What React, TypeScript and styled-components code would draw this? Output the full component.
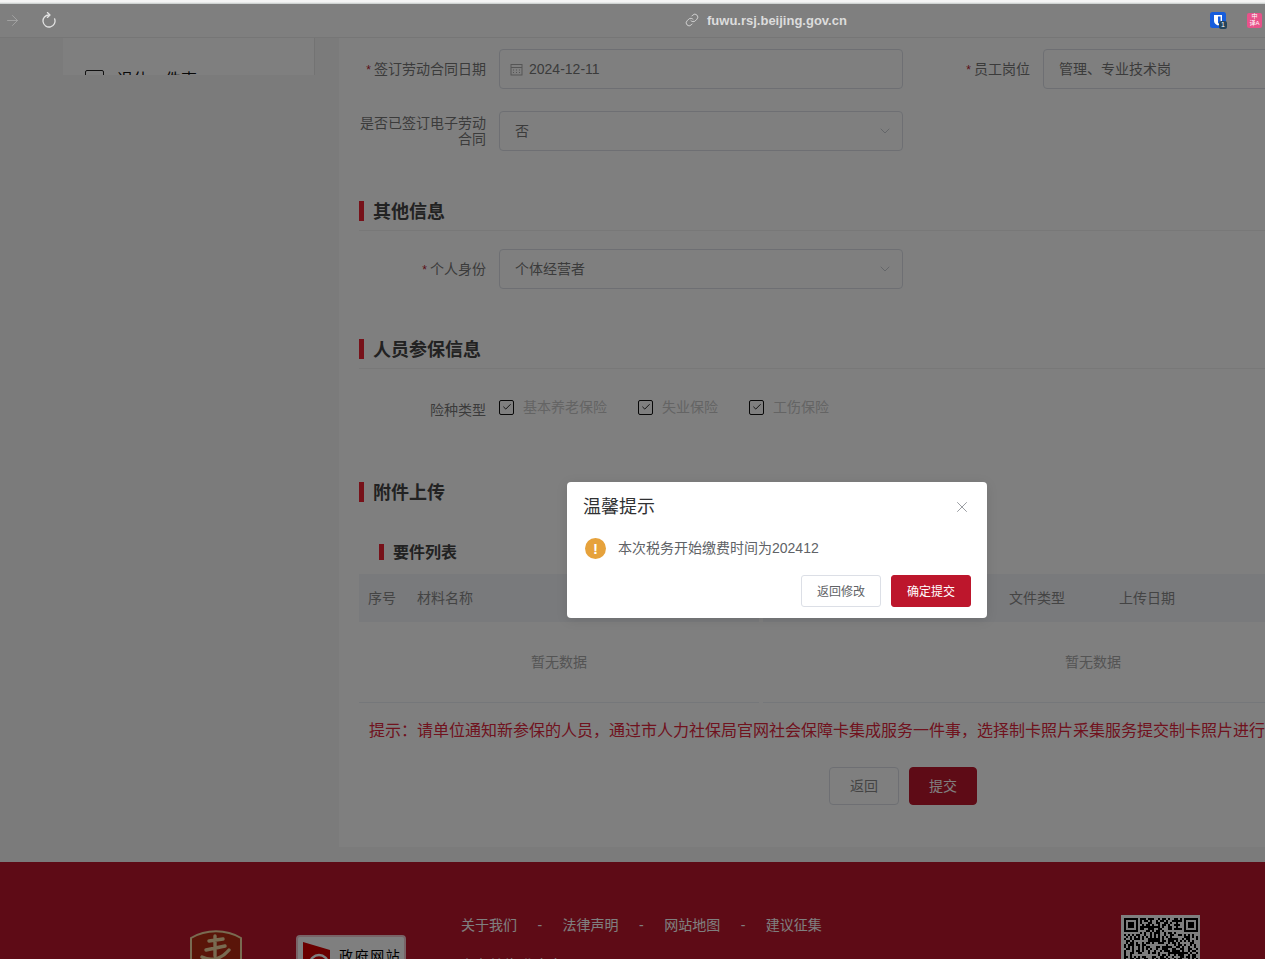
import styled, { createGlobalStyle } from "styled-components";
import { ArrowRight, Check, ChevronDown, Link, X } from "lucide-react";

const FONT = `"Liberation Sans", "Noto Sans CJK SC", sans-serif`;

const NOTICE =
  "提示\uFF1A请单位通知新参保的人员\uFF0C通过市人力社保局官网社会保障卡集成服务一件事\uFF0C选择制卡照片采集服务提交制卡照片进行制卡。";

const GlobalStyle = createGlobalStyle`
  html, body {
    margin: 0;
    padding: 0;
    height: 100%;
    overflow: hidden;
    background: #fff;
    font-family: ${FONT};
  }
  * {
    box-sizing: border-box;
  }
`;

function QrCode() {
  const size = 37;
  const cells: { x: number; y: number }[] = [];
  let seed = 7;
  const finder = (x: number, y: number, ox: number, oy: number) => {
    const dx = x - ox;
    const dy = y - oy;
    if (dx < -1 || dy < -1 || dx > 7 || dy > 7) return null;
    if (dx < 0 || dy < 0 || dx > 6 || dy > 6) return false;
    if (dx === 0 || dy === 0 || dx === 6 || dy === 6) return true;
    return dx >= 2 && dx <= 4 && dy >= 2 && dy <= 4;
  };
  for (let y = 0; y < size; y++) {
    for (let x = 0; x < size; x++) {
      seed = (seed * 1103515245 + 12345) & 0x7fffffff;
      const f = finder(x, y, 0, 0) ?? finder(x, y, 30, 0) ?? finder(x, y, 0, 30);
      const on = f === null ? (seed >> 12) % 2 === 0 : f;
      if (on) cells.push({ x, y });
    }
  }
  return (
    <QrBox>
      <svg width="74" height="74" viewBox={`0 0 ${size} ${size}`}>
        {cells.map((c) => (
          <rect key={`${c.x}-${c.y}`} x={c.x} y={c.y} width="1" height="1" fill="#000" />
        ))}
      </svg>
    </QrBox>
  );
}

function ReloadIcon() {
  return (
    <svg width="16" height="16" viewBox="0 0 16 16" fill="none" stroke="#e2e2e2" strokeWidth="1.3">
      <path d="M8 3A6 6 0 1 0 13.6 6.8" strokeLinecap="round" />
      <path d="M6.4 0.6L9 3L6.4 5.4" strokeLinecap="round" strokeLinejoin="round" />
    </svg>
  );
}

function CalendarIcon() {
  return (
    <svg width="13" height="13" viewBox="0 0 13 13" fill="none" stroke="#aaa" strokeWidth="1">
      <rect x="1" y="1.5" width="11" height="10.5" />
      <path d="M1 4.5h11" />
      <path d="M3 7h1M6 7h1M9 7h1M3 9.5h1M6 9.5h1M9 9.5h1" />
    </svg>
  );
}

function Emblem() {
  return (
    <svg width="52" height="60" viewBox="0 0 52 60">
      <path
        d="M1 8C16 -1 36 -1 51 8V42C51 52 36 58 26 60C16 58 1 52 1 42Z"
        fill="#b52a12"
        stroke="#f2d6a2"
        strokeWidth="2"
      />
      <path
        d="M25 6V14M19 11L33 9M16 20L35 16M25 14V26M12 27C24 33 34 26 39 20"
        fill="none"
        stroke="#f2d6a2"
        strokeWidth="3.4"
        strokeLinecap="round"
      />
    </svg>
  );
}

function GovFlag() {
  return (
    <svg width="30" height="26" viewBox="0 0 30 26">
      <path d="M0 0L27 8V26H0Z" fill="#d40000" />
      <circle cx="16" cy="22" r="9" fill="none" stroke="#fff" strokeWidth="2.4" />
    </svg>
  );
}

function Select({ value }: { value: string }) {
  return (
    <InputBox>
      <SelectValue>{value}</SelectValue>
      <ChevronDown size={16} color="#c0c4cc" strokeWidth={1.3} />
    </InputBox>
  );
}

function InsuranceOption({ label }: { label: string }) {
  return (
    <CheckOption>
      <CheckBox>
        <Check size={10} color="#000" strokeWidth={2} />
      </CheckBox>
      <CheckLabel>{label}</CheckLabel>
    </CheckOption>
  );
}

export default function App() {
  return (
    <Page>
      <GlobalStyle />
      <BrowserBar>
        <TopEdge />
        <BarRow>
          <BarLeft>
            <ArrowRight size={17} color="#a5a5a5" strokeWidth={1.3} />
            <ReloadIcon />
          </BarLeft>
          <UrlBox>
            <Link size={14} color="#dadada" strokeWidth={1.5} />
            <UrlText>fuwu.rsj.beijing.gov.cn</UrlText>
          </UrlBox>
          <BarRight>
            <Shield>
              <svg width="16" height="16" viewBox="0 0 16 16">
                <rect width="16" height="16" rx="2.5" fill="#175ddc" />
                <path d="M4 3H12V9C12 11 10 12.5 8 13.5C6 12.5 4 11 4 9Z" fill="#fff" />
                <path d="M8 4.6H10.6V8.8C10.6 10 9.4 11 8 11.8Z" fill="#175ddc" />
              </svg>
              <ShieldBadge>1</ShieldBadge>
            </Shield>
            <TranslateBadge>
              中
              <br />
              译A
            </TranslateBadge>
          </BarRight>
        </BarRow>
      </BrowserBar>

      <Main>
        <Sidebar>
          <MenuCard>
            <MenuRow>
              <MenuIcon />
              <MenuText>退休一件事</MenuText>
              <ChevronDown size={15} color="#111" strokeWidth={1.5} />
            </MenuRow>
          </MenuCard>
        </Sidebar>

        <Content>
          <FieldGrid>
            <Field>
              <FieldLabel>
                <Star>*</Star>签订劳动合同日期
              </FieldLabel>
              <InputBox>
                <CalendarIcon />
                <DateValue>2024-12-11</DateValue>
              </InputBox>
            </Field>
            <Field>
              <FieldLabel>
                <Star>*</Star>员工岗位
              </FieldLabel>
              <InputBox>
                <SelectValue>管理、专业技术岗</SelectValue>
              </InputBox>
            </Field>
          </FieldGrid>
          <FieldGrid>
            <Field>
              <FieldLabel>是否已签订电子劳动合同</FieldLabel>
              <Select value="否" />
            </Field>
          </FieldGrid>

          <SectionTitle>其他信息</SectionTitle>
          <FieldGrid>
            <Field>
              <FieldLabel>
                <Star>*</Star>个人身份
              </FieldLabel>
              <Select value="个体经营者" />
            </Field>
          </FieldGrid>

          <SectionTitle>人员参保信息</SectionTitle>
          <CheckRow>
            <CheckRowLabel>险种类型</CheckRowLabel>
            <InsuranceOption label="基本养老保险" />
            <InsuranceOption label="失业保险" />
            <InsuranceOption label="工伤保险" />
          </CheckRow>

          <SectionTitle $plain>附件上传</SectionTitle>
          <SubTitle>要件列表</SubTitle>
          <Tables>
            <TableBlock $width={400}>
              <TableHead>
                <HeadCell $width={58} $pad={9}>序号</HeadCell>
                <HeadCell>材料名称</HeadCell>
              </TableHead>
              <TableEmpty>暂无数据</TableEmpty>
            </TableBlock>
            <TableBlock $width={660}>
              <TableHead>
                <HeadCell $width={246} />
                <HeadCell $width={110}>文件类型</HeadCell>
                <HeadCell>上传日期</HeadCell>
              </TableHead>
              <TableEmpty>暂无数据</TableEmpty>
            </TableBlock>
          </Tables>
          <Notice>{NOTICE}</Notice>
          <Actions>
            <PageButton>返回</PageButton>
            <PageButton $primary>提交</PageButton>
          </Actions>
        </Content>
      </Main>

      <Footer>
        <EmblemSlot>
          <Emblem />
        </EmblemSlot>
        <GovBadge>
          <GovFlag />
          <GovText>政府网站</GovText>
        </GovBadge>
        <FooterLinks>
          <LinkRow>
            <span>关于我们</span>
            <Dash>-</Dash>
            <span>法律声明</span>
            <Dash>-</Dash>
            <span>网站地图</span>
            <Dash>-</Dash>
            <span>建议征集</span>
          </LinkRow>
          <LinkRow>主办单位:北京市</LinkRow>
        </FooterLinks>
        <QrCode />
      </Footer>

      <Overlay />
      <Dialog role="dialog">
        <DialogHeader>
          <DialogTitle>温馨提示</DialogTitle>
          <X size={18} color="#909399" strokeWidth={1.2} />
        </DialogHeader>
        <DialogBody>
          <WarnIcon>!</WarnIcon>
          <DialogText>本次税务开始缴费时间为202412</DialogText>
        </DialogBody>
        <DialogFooter>
          <DialogButton>返回修改</DialogButton>
          <DialogButton $primary>确定提交</DialogButton>
        </DialogFooter>
      </Dialog>
    </Page>
  );
}

const Page = styled.div`
  position: relative;
  width: 100%;
  height: 100vh;
  overflow: hidden;
  display: flex;
  flex-direction: column;
  font-family: ${FONT};
`;

const BrowserBar = styled.header`
  position: relative;
  z-index: 3;
  flex: none;
  height: 38px;
  background: #7f7f7f;
  border-bottom: 1px solid #767676;
`;

const TopEdge = styled.div`
  height: 4px;
  background: linear-gradient(#f4f4f4 0, #f4f4f4 2px, #c3c8c7 4px);
`;

const BarRow = styled.div`
  height: 33px;
  display: flex;
  align-items: center;
  padding-bottom: 1px;
`;

const BarLeft = styled.div`
  display: flex;
  align-items: center;
  gap: 20px;
  padding-left: 4px;
  width: 685px;
`;

const UrlBox = styled.div`
  display: flex;
  align-items: center;
  gap: 8px;
`;

const UrlText = styled.span`
  font-size: 13px;
  font-weight: 700;
  color: #dcdcdc;
`;

const BarRight = styled.div`
  margin-left: auto;
  display: flex;
  align-items: center;
  gap: 21px;
  padding-right: 3px;
`;

const Shield = styled.div`
  position: relative;
  width: 16px;
  height: 16px;
`;

const ShieldBadge = styled.span`
  position: absolute;
  right: -1px;
  bottom: -1px;
  width: 8px;
  height: 8px;
  background: #24445c;
  border-radius: 2px;
  color: #fff;
  font-size: 7px;
  line-height: 8px;
  text-align: center;
`;

const TranslateBadge = styled.div`
  width: 15px;
  height: 15px;
  overflow: hidden;
  border-radius: 2px;
  background: #e8528a;
  color: #fff;
  font-size: 6px;
  line-height: 7px;
  text-align: center;
  white-space: nowrap;
`;

const Main = styled.main`
  flex: none;
  height: 824px;
  display: flex;
  background: #f6f6f6;
`;

const Sidebar = styled.aside`
  flex: none;
  width: 339px;
  padding-left: 63px;
`;

const MenuCard = styled.div`
  width: 252px;
  height: 37px;
  overflow: hidden;
  background: #fff;
  border-right: 1px solid #e6e6e6;
  padding: 30px 22px 0;
`;

const MenuRow = styled.div`
  display: flex;
  align-items: center;
  height: 20px;
`;

const MenuIcon = styled.span`
  width: 19px;
  height: 16px;
  border: 1.5px solid #222;
  border-radius: 2px;
  margin-right: 13px;
  flex: none;
`;

const MenuText = styled.span`
  flex: 1;
  font-size: 16px;
  color: #111;
`;

const Content = styled.section`
  flex: 1;
  min-width: 0;
  height: 809px;
  overflow: hidden;
  background: #fff;
  padding: 11px 0 0 20px;
`;

const FieldGrid = styled.div`
  display: flex;
  width: 1088px;
  margin-bottom: 22px;
`;

const Field = styled.div`
  flex: none;
  width: 544px;
  display: flex;
  align-items: center;
`;

const FieldLabel = styled.label`
  flex: none;
  width: 127px;
  margin-right: 13px;
  font-size: 14px;
  line-height: 16px;
  color: #777;
  text-align: right;
`;

const Star = styled.span`
  color: #b3202f;
  margin-right: 3px;
  font-size: 12px;
`;

const InputBox = styled.div`
  flex: none;
  width: 404px;
  height: 40px;
  border: 1px solid #dcdfe6;
  border-radius: 4px;
  display: flex;
  align-items: center;
  padding: 0 9px 0 10px;
  font-size: 14px;
  color: #777;
`;

const SelectValue = styled.span`
  flex: 1;
  padding: 0 0 2px 5px;
`;

const DateValue = styled.span`
  margin-left: 6px;
`;

const SectionTitle = styled.h2<{ $plain?: boolean }>`
  margin: 50px 0 18px;
  height: 30px;
  padding-left: 14px;
  position: relative;
  font-size: 18px;
  line-height: 22px;
  font-weight: 700;
  color: #444;
  border-bottom: ${(p) => (p.$plain ? "none" : "1px solid #f0f0f0")};

  &::before {
    content: "";
    position: absolute;
    left: 0;
    top: 0;
    width: 5px;
    height: 20px;
    background: #ee2233;
  }
`;

const CheckRow = styled.div`
  display: flex;
  align-items: flex-start;
  height: 40px;
  margin-bottom: 55px;
`;

const CheckRowLabel = styled.span`
  width: 127px;
  margin: 15px 13px 0 0;
  font-size: 14px;
  line-height: 16px;
  color: #777;
  text-align: right;
`;

const CheckOption = styled.div`
  display: flex;
  align-items: center;
  height: 40px;
  margin-right: 31px;
`;

const CheckBox = styled.span`
  width: 15px;
  height: 15px;
  border: 1px solid #111;
  border-radius: 2px;
  background: #fff;
  display: flex;
  align-items: center;
  justify-content: center;
  margin-right: 9px;
`;

const CheckLabel = styled.span`
  padding-bottom: 2px;
  font-size: 14px;
  color: #c8c8c8;
`;

const SubTitle = styled.h3`
  margin: 32px 0 14px 20px;
  height: 16px;
  padding-left: 14px;
  position: relative;
  font-size: 16px;
  line-height: 18px;
  font-weight: 700;
  color: #444;

  &::before {
    content: "";
    position: absolute;
    left: 0;
    top: 0;
    width: 5px;
    height: 16px;
    background: #ee2233;
  }
`;

const Tables = styled.div`
  display: flex;
  gap: 4px;
  width: 1064px;
`;

const TableBlock = styled.div<{ $width: number }>`
  flex: none;
  width: ${(p) => p.$width}px;
  border-bottom: 1px solid #ebeef5;
`;

const TableHead = styled.div`
  display: flex;
  align-items: center;
  height: 48px;
  padding-bottom: 2px;
  background: #f2f4f8;
`;

const HeadCell = styled.div<{ $width?: number; $pad?: number }>`
  flex: ${(p) => (p.$width ? `none` : 1)};
  width: ${(p) => (p.$width ? `${p.$width}px` : "auto")};
  padding-left: ${(p) => p.$pad ?? 0}px;
  font-size: 14px;
  color: #888;
`;

const TableEmpty = styled.div`
  height: 80px;
  padding-bottom: 2px;
  display: flex;
  align-items: center;
  justify-content: center;
  font-size: 14px;
  color: #a8a8a8;
`;

const Notice = styled.p`
  margin: 18px 0 0 10px;
  font-size: 16px;
  line-height: 20px;
  color: #e0263c;
  white-space: nowrap;
`;

const Actions = styled.div`
  display: flex;
  gap: 10px;
  margin: 26px 0 0 470px;
`;

const PageButton = styled.button<{ $primary?: boolean }>`
  width: ${(p) => (p.$primary ? 68 : 70)}px;
  height: 38px;
  border-radius: 4px;
  border: 1px solid ${(p) => (p.$primary ? "#bd162c" : "#dcdfe6")};
  background: ${(p) => (p.$primary ? "#bd162c" : "#fff")};
  color: ${(p) => (p.$primary ? "#fff" : "#888")};
  font-family: inherit;
  font-size: 14px;
  padding: 0 0 2px;
`;

const Footer = styled.footer`
  flex: none;
  height: 97px;
  overflow: hidden;
  background: #bd162c;
  display: flex;
  align-items: flex-start;
  padding: 53px 65px 0 190px;
`;

const EmblemSlot = styled.div`
  margin-top: 15px;
  line-height: 0;
`;

const GovBadge = styled.div`
  margin: 20px 0 0 54px;
  width: 110px;
  height: 42px;
  border: 2px solid #f1c8cf;
  border-radius: 4px;
  background: #fff;
  display: flex;
  align-items: flex-start;
  padding: 5px 0 0 5px;
`;

const GovText = styled.span`
  margin: 3px 0 0 6px;
  font-size: 14px;
  letter-spacing: 1.6px;
  color: #000;
  white-space: nowrap;
`;

const FooterLinks = styled.div`
  margin-left: 55px;
  display: flex;
  flex-direction: column;
  gap: 20px;
`;

const LinkRow = styled.div`
  display: flex;
  height: 20px;
  font-size: 14px;
  line-height: 20px;
  color: #fff;
`;

const Dash = styled.span`
  width: 45.6px;
  text-align: center;
`;

const QrBox = styled.div`
  margin-left: auto;
  width: 79px;
  height: 79px;
  padding: 2.5px;
  background: #fff;
  line-height: 0;
`;

const Overlay = styled.div`
  position: absolute;
  inset: 0;
  z-index: 1;
  background: rgba(0, 0, 0, 0.5);
`;

const Dialog = styled.div`
  position: absolute;
  z-index: 2;
  left: 567px;
  top: 482px;
  width: 420px;
  height: 136px;
  background: #fff;
  border-radius: 4px;
  box-shadow: 0 2px 12px rgba(0, 0, 0, 0.1);
  padding: 15px 16px 0;
`;

const DialogHeader = styled.div`
  display: flex;
  align-items: center;
  justify-content: space-between;
  height: 20px;
`;

const DialogTitle = styled.span`
  font-size: 18px;
  line-height: 20px;
  color: #303133;
`;

const DialogBody = styled.div`
  display: flex;
  align-items: center;
  margin-top: 20px;
  height: 22px;
  padding-left: 2px;
`;

const WarnIcon = styled.span`
  width: 21px;
  height: 21px;
  border-radius: 50%;
  background: #e6a23c;
  color: #fff;
  font-size: 15px;
  font-weight: 700;
  line-height: 21px;
  text-align: center;
`;

const DialogText = styled.span`
  margin-left: 12px;
  padding-bottom: 2px;
  font-size: 14px;
  color: #606266;
`;

const DialogFooter = styled.div`
  display: flex;
  justify-content: flex-end;
  gap: 10px;
  margin-top: 16px;
`;

const DialogButton = styled.button<{ $primary?: boolean }>`
  width: 80px;
  height: 32px;
  padding: 0 0 2px;
  border-radius: 3px;
  border: 1px solid ${(p) => (p.$primary ? "#bd162c" : "#dcdfe6")};
  background: ${(p) => (p.$primary ? "#bd162c" : "#fff")};
  color: ${(p) => (p.$primary ? "#fff" : "#606266")};
  font-family: inherit;
  font-size: 12px;
`;
